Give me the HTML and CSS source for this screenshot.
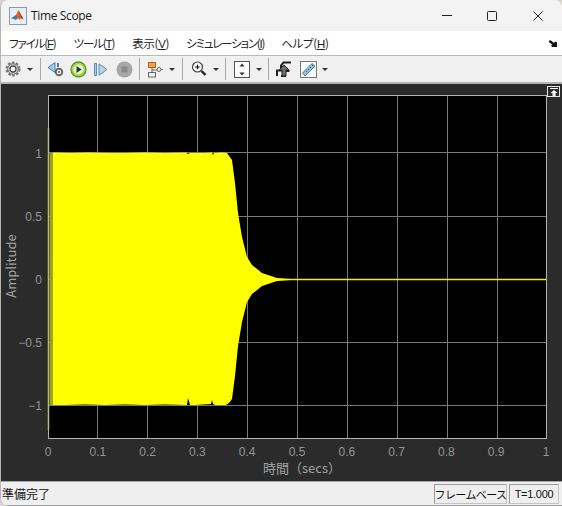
FILE: index.html
```html
<!DOCTYPE html>
<html lang="ja">
<head>
<meta charset="utf-8">
<title>Time Scope</title>
<link rel="stylesheet" href="styles.css">
</head>
<body>
<div class="window">
  <header class="titlebar">
    <svg class="app-icon" width="18" height="18" viewBox="0 0 18 18">
      <rect x="0.5" y="0.5" width="17" height="17" fill="#e8eef4" stroke="#8d99a6"/>
      <path d="M2 11l3-1.500 2-1.500 2.500-5 2 4 3 5.500-2.500-1.500-1.500 2-2.500-3-2.500-1z" fill="#d9661f"/>
      <path d="M2 11l3-1.500 2-1.500 2 3-2 2z" fill="#3f78b5"/>
      <path d="M9.500 3l2 4 3 5.500-2.500-1.500z" fill="#b3261e"/>
    </svg>
    <span class="title">Time Scope</span>
    <div class="win-controls">
      <svg width="10" height="2" viewBox="0 0 10 2"><rect width="10" height="1" fill="#222"/></svg>
      <svg width="10" height="10" viewBox="0 0 10 10"><rect x="0.500" y="0.500" width="9" height="9" rx="1" fill="none" stroke="#222"/></svg>
      <svg class="win-close" width="10" height="10" viewBox="0 0 10 10"><path d="M.5.500l9 9M9.500.500l-9 9" stroke="#222" fill="none"/></svg>
    </div>
  </header>

  <nav class="menubar">
    <span class="menu m1">ファイル(<u>F</u>)</span>
    <span class="menu m2">ツール(<u>T</u>)</span>
    <span class="menu m3">表示(<u>V</u>)</span>
    <span class="menu m4">シミュレーション(<u>I</u>)</span>
    <span class="menu m5">ヘルプ(<u>H</u>)</span>
    <svg class="dock-arrow" width="8" height="7" viewBox="0 0 8 7"><path d="M0 .500h2l3 2.500 1-1.500 2 1V7H3L2 5.500l1.500-.5L0 2z" fill="#111"/></svg>
  </nav>

  <div class="toolbar">
    <span class="tool">
      <svg width="16" height="16" viewBox="0 0 16 16"><circle cx="8" cy="8" r="6.500" fill="none" stroke="#777" stroke-width="2" stroke-dasharray="2.600 1.500"/><circle cx="8" cy="8" r="5.300" fill="#d8d8d8" stroke="#6a6a6a" stroke-width="1"/><circle cx="8" cy="8" r="3" fill="#f4f4f4" stroke="#4c4c4c" stroke-width="1.300"/></svg>
    </span>
    <span class="drop"></span>
    <span class="sep sep-a"></span>
    <span class="tool">
      <svg width="18" height="17" viewBox="0 0 18 17"><path d="M8 1.500v10L1 6.500z" fill="#a9c9e6" stroke="#4f7fa8"/><path d="M11 2v4" stroke="#4f7fa8" stroke-width="2"/><circle cx="12" cy="11" r="4.200" fill="#666"/><circle cx="12" cy="11" r="2.300" fill="#fff"/><circle cx="12" cy="11" r="1.100" fill="#666"/></svg>
    </span>
    <span class="tool">
      <svg width="17" height="17" viewBox="0 0 17 17"><circle cx="8.500" cy="8.500" r="7.500" fill="#a3d75b" stroke="#5c9a23" stroke-width="1.300"/><circle cx="8.500" cy="8.500" r="5" fill="#e5f4c8"/><path d="M6.500 5l5 3.500-5 3.500z" fill="#2d3a1c"/></svg>
    </span>
    <span class="tool">
      <svg width="15" height="13" viewBox="0 0 15 13"><path d="M1.500.500h2v12h-2z" fill="#a9c9e6" stroke="#5d8cb6"/><path d="M6 .800l8 5.700-8 5.700z" fill="#b7d4ec" stroke="#5d8cb6"/></svg>
    </span>
    <span class="tool tool-stop">
      <svg width="17" height="17" viewBox="0 0 17 17"><circle cx="8.500" cy="8.500" r="8" fill="#a6a6a6"/><rect x="5.500" y="5.500" width="6" height="6" fill="#8a8a8a"/></svg>
    </span>
    <span class="sep sep-a"></span>
    <span class="tool">
      <svg width="18" height="17" viewBox="0 0 18 17"><rect x="2.500" y="1.500" width="7" height="5" fill="#f2a33c" stroke="#a9681c"/><rect x="2.500" y="11.500" width="7" height="4.500" fill="#f6f6f6" stroke="#666"/><path d="M6 6.500v5M6 9h5" stroke="#666" fill="none"/><circle cx="13" cy="8.500" r="2" fill="#eee" stroke="#666"/><path d="M15 8.500h2" stroke="#666"/></svg>
    </span>
    <span class="drop"></span>
    <span class="sep sep-b"></span>
    <span class="tool">
      <svg width="16" height="16" viewBox="0 0 16 16"><circle cx="6.500" cy="6" r="5" fill="#f8f8f8" stroke="#444" stroke-width="1.200"/><path d="M4.200 6h4.600M6.500 3.700v4.600" stroke="#111" stroke-width="1.200"/><path d="M10.500 10l4 4" stroke="#222" stroke-width="2.400"/></svg>
    </span>
    <span class="drop"></span>
    <span class="sep sep-c"></span>
    <span class="tool">
      <svg width="16" height="17" viewBox="0 0 16 17"><rect x="0.500" y="0.500" width="15" height="16" fill="#fbfbfb" stroke="#555"/><path d="M8 2.500l2.500 3h-5zM8 14.500l2.500-3h-5z" fill="#333"/></svg>
    </span>
    <span class="drop"></span>
    <span class="sep sep-d"></span>
    <span class="tool">
      <svg width="16" height="16" viewBox="0 0 16 16"><path d="M1 15V9.500h4V4.500l2.500-3H15" fill="none" stroke="#222" stroke-width="2"/><path d="M5 15h4V10h4.500" fill="none" stroke="#222" stroke-width="2"/><path d="M3 9l5-5 5 5h-3v6H6V9z" fill="#6e6e6e" stroke="#222" stroke-width="1"/></svg>
    </span>
    <span class="tool tool-ruler">
      <svg width="17" height="17" viewBox="0 0 17 17"><rect x="0.500" y="0.500" width="16" height="16" fill="#fbfbfb" stroke="#777"/><path d="M2.500 12l9.500-9.500 3 2.500-10 10z" fill="#8fc1de" stroke="#4d7f9c"/><path d="M6 10l1 1M8 8l1 1M10 6l1 1M12 4l1 1" stroke="#35607a"/></svg>
    </span>
    <span class="drop"></span>
  </div>

  <main class="plot">
    <svg class="scope" width="561" height="397" viewBox="1 84 561 397">
      <rect class="axes-bg" x="48" y="95" width="498" height="343"/>
      <g class="grid">
        <path d="M97.500 95v343M147.500 95v343M197.500 95v343M247.500 95v343M297.500 95v343M347.500 95v343M397.500 95v343M447.500 95v343M497.500 95v343"/>
        <path d="M48 152.500h498M48 216.500h498M48 279.500h498M48 342.500h498M48 405.500h498"/>
      </g>
      <path class="trace-line" d="M48.500 128V430M270 279.500H546"/>
      <rect class="trace-dim" x="49.500" y="153" width="3.500" height="252"/>
      <polygon class="trace" points="53,152.500 70,153 90,152.500 108,153 125,153 145,152.500 165,153 186,152.500 188,154 190,153 205,153 212,152.500 213,155 214,153 222,152.500 227,153 232,160 235,183 238,213 242,237 247,257 252,265 262,273 277,278 290,279 290,280 277,281 262,286 252,294 247,302 242,322 238,346 235,376 232,399 229,403 226,405 215,405 213,404 212,400 211,404 195,405 190,405 188,398 187,405 165,404.500 145,405 125,404.500 105,405 85,404.500 65,405 53,405"/>
      <rect class="axes-box" x="48.500" y="95.500" width="497.500" height="342.500"/>
      <g class="ytick">
        <text x="42" y="158">1</text>
        <text x="42" y="221">0.5</text>
        <text x="42" y="284">0</text>
        <text x="42" y="347">−0.5</text>
        <text x="42" y="410">−1</text>
      </g>
      <g class="xtick">
        <text x="48" y="456">0</text>
        <text x="97.800" y="456">0.1</text>
        <text x="147.600" y="456">0.2</text>
        <text x="197.400" y="456">0.3</text>
        <text x="247.200" y="456">0.4</text>
        <text x="297" y="456">0.5</text>
        <text x="346.800" y="456">0.6</text>
        <text x="396.600" y="456">0.7</text>
        <text x="446.400" y="456">0.8</text>
        <text x="496.200" y="456">0.9</text>
        <text x="546" y="456">1</text>
      </g>
      <text class="axis-label" x="302" y="473">時間（secs）</text>
      <text class="axis-label" transform="translate(16 266) rotate(-90)">Amplitude</text>
    </svg>
    <span class="undock">
      <svg width="10" height="8" viewBox="0 0 10 8"><path d="M1 .500h8" stroke="#fff"/><path d="M5 2l3.500 3H6.500v3h-3V5H1.500z" fill="#fff"/></svg>
    </span>
  </main>

  <footer class="statusbar">
    <span class="status-text">準備完了</span>
    <span class="field field-mode">フレームベース</span>
    <span class="field field-time">T=1.000</span>
  </footer>
</div>
</body>
</html>
```

FILE: styles.css
```css
* { box-sizing: border-box; }
html, body { margin: 0; padding: 0; background: #d9d5d0; }
body { width: 562px; height: 506px; overflow: hidden; font-family: "Noto Sans CJK JP", "Noto Sans", sans-serif; }

.window {
  width: 562px;
  height: 506px;
  display: flex;
  flex-direction: column;
  background: #f3f3f3;
  border-radius: 8px 8px 0 8px;
  border-left: 1px solid #b5b5b5;
  overflow: hidden;
}

.titlebar {
  height: 31px;
  display: flex;
  align-items: center;
  padding-left: 8px;
  background: #f3f3f3;
  flex: none;
}
.app-icon { flex: none; }
.title { margin-left: 4px; font: 12px/16px "Open Sans", sans-serif; letter-spacing: -.35px; color: #1a1a1a; }
.win-controls {
  margin-left: auto;
  display: flex;
  align-items: center;
  gap: 35px;
  padding-right: 19px;
}
.win-close { margin-left: 1px; }

.menubar {
  height: 25px;
  flex: none;
  display: flex;
  align-items: center;
  background: #fff;
  border-bottom: 1px solid #b9b9b9;
  font-size: 11.500px;
  color: #222;
  position: relative;
}
.menu { white-space: nowrap; font-feature-settings: "palt"; letter-spacing: -.3px; line-height: 16px; }
.menu u { text-underline-offset: 1px; font-family: "Liberation Sans", sans-serif; }
.m1 { margin-left: 8px; letter-spacing: -1.150px; }
.m2 { margin-left: 18px; letter-spacing: -1.150px; }
.m3 { margin-left: 18px; }
.m4 { margin-left: 17px; letter-spacing: -1.200px; }
.m5 { margin-left: 17px; }
.dock-arrow { position: absolute; right: 5px; top: 9px; }

.toolbar {
  height: 28px;
  flex: none;
  display: flex;
  align-items: center;
  padding-left: 1px;
  background: #f0f0f0;
  border-bottom: 2px solid #b4b4b4;
}
.tool {
  width: 22px;
  height: 22px;
  flex: none;
  display: flex;
  align-items: center;
  justify-content: center;
}
.tool-stop { margin-left: 2px; }
.tool-ruler { margin-left: 2px; }
.drop {
  width: 12px;
  height: 22px;
  flex: none;
  position: relative;
}
.drop::after {
  content: "";
  position: absolute;
  left: 3px;
  top: 10px;
  border: 3px solid transparent;
  border-top: 3px solid #333;
  border-bottom: 0;
}
.sep { width: 1px; height: 22px; flex: none; background: #a8a8a8; }
.sep-a { margin: 0 4px; }
.sep-b { margin: 0 5px 0 4px; }
.sep-c { margin: 0 5px 0 3px; }
.sep-d { margin: 0 4px 0 3px; }

.plot {
  flex: 1;
  min-height: 0;
  background: #2b2b2b;
  position: relative;
}
.scope { display: block; }
.axes-bg { fill: #000; }
.grid path { stroke: #7a7a7a; stroke-width: 1; fill: none; shape-rendering: crispEdges; }
.axes-box { fill: none; stroke: #b4b4b4; stroke-width: 1; shape-rendering: crispEdges; }
.trace { fill: #ffff00; }
.trace-line { stroke: #f0f000; stroke-width: 1.400; fill: none; }
.trace-dim { fill: #a3a30c; }
.ytick text, .xtick text { font: 12px "Liberation Sans", sans-serif; fill: #959595; }
.ytick text { text-anchor: end; }
.xtick text { text-anchor: middle; }
.axis-label { font: 13px "Noto Sans CJK JP", "Liberation Sans", sans-serif; fill: #a2a2a2; text-anchor: middle; }
.undock {
  position: absolute;
  top: 2px;
  right: 2px;
  width: 13px;
  height: 11px;
  border: 1px solid #e6e6e6;
  display: flex;
  align-items: center;
  justify-content: center;
  background: #2b2b2b;
}

.statusbar {
  height: 25px;
  flex: none;
  display: flex;
  align-items: center;
  background: #efefef;
  border-top: 1px solid #a5a5a5;
  border-bottom: 1px solid #9d9d9d;
  font-size: 12px;
  color: #111;
  padding-right: 3px;
}
.status-text { margin-left: 1px; margin-right: auto; line-height: 16px; }
.field {
  height: 20px;
  display: flex;
  align-items: center;
  justify-content: center;
  border: 1px solid #c4c4c4;
  border-top-color: #9a9a9a;
  border-left-color: #9a9a9a;
  line-height: 16px;
  white-space: nowrap;
}
.field-mode { width: 73px; font-size: 11px; letter-spacing: -.6px; }
.field-time { width: 50px; margin-left: 2px; font: 11px "Liberation Sans", sans-serif; letter-spacing: -.3px; }
```
